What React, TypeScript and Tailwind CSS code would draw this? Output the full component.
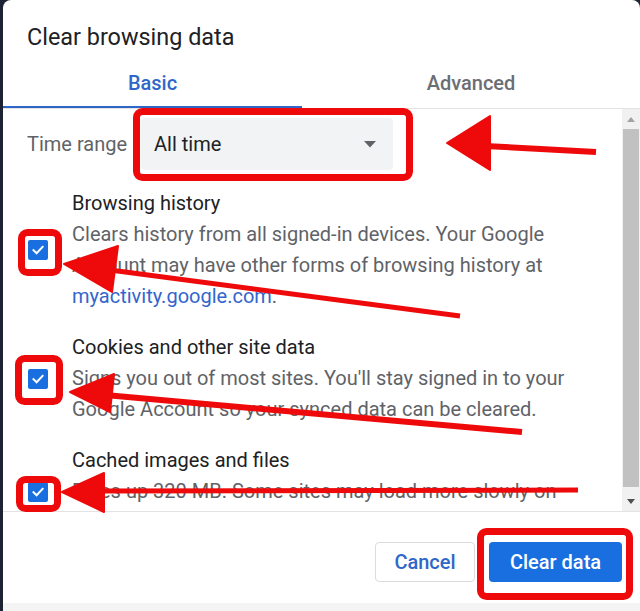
import React from "react";

const RED = "#ee0a0a";

function Checkbox() {
  return (
    <div className="w-[20px] h-[20px] rounded-[2px] bg-[#1a6fe0] flex items-center justify-center shrink-0">
      <svg width="14" height="14" viewBox="0 0 14 14">
        <path d="M2.5 7.2 L5.6 10.2 L11.6 3.8" stroke="white" strokeWidth="2" fill="none" strokeLinecap="square" />
      </svg>
    </div>
  );
}

function Item({ title, children }: { title: string; children: React.ReactNode }) {
  return (
    <div className="flex items-center">
      <div className="w-[69px] pl-[25px] flex items-center shrink-0">
        <Checkbox />
      </div>
      <div className="flex-1 pr-[28px] text-[20px] leading-[31px]">
        <div className="text-[#202124]">{title}</div>
        <div className="text-[#5f6368]">{children}</div>
      </div>
    </div>
  );
}

function Overlay() {
  return (
    <svg className="absolute inset-0 pointer-events-none" width="640" height="611" viewBox="0 0 640 611">
      <g fill="none" stroke={RED} strokeWidth="7">
        <rect x="136.5" y="111.5" width="273" height="66" rx="6" />
        <rect x="21.5" y="232.5" width="37" height="40" rx="6" />
        <rect x="18.5" y="358.5" width="41" height="43" rx="6" />
        <rect x="19.5" y="479.5" width="38" height="29" rx="6" />
        <rect x="480.5" y="531.5" width="149" height="65" rx="6" />
      </g>
      <g fill={RED} stroke={RED} strokeLinejoin="round">
        <polygon points="447,143 490,116 490,170" strokeWidth="2" />
        <line x1="485" y1="146" x2="596" y2="152" strokeWidth="6" />
        <polygon points="64,264 118,246 112,292" strokeWidth="2" />
        <line x1="110" y1="270" x2="460" y2="316" strokeWidth="5" />
        <polygon points="70,392 114,374 110,412" strokeWidth="2" />
        <line x1="105" y1="395" x2="522" y2="432" strokeWidth="6" />
        <polygon points="62,492 104,473 104,512" strokeWidth="2" />
        <line x1="100" y1="491" x2="578" y2="490" strokeWidth="5" />
      </g>
    </svg>
  );
}

export default function App() {
  return (
    <div
      className="relative w-[640px] h-[611px] bg-[#1d2334] flex overflow-hidden"
      style={{ fontFamily: "Roboto, 'Liberation Sans', sans-serif" }}
    >
      <div className="w-[3px] shrink-0" />
      <div className="flex-1 flex flex-col">
        <div className="flex-1 bg-white rounded-t-[8px] flex flex-col">
          <div className="h-[60px] pl-[24px] pt-[21px] text-[23.4px] leading-[32px] text-[#202124]">Clear browsing data</div>
          <div className="flex h-[49px] border-b border-[#e3e3e3]">
            <div className="w-[299px] flex flex-col">
              <div className="flex-1 flex items-center justify-center text-[20px] font-medium text-[#2f67c9]">Basic</div>
              <div className="h-[2px] bg-[#2f67c9]" />
            </div>
            <div className="flex-1 flex items-center justify-center pb-[2px] text-[20px] font-medium text-[#6b6e72]">Advanced</div>
          </div>
          <div className="h-[403px] flex border-b border-[#e3e3e3] overflow-hidden">
            <div className="flex-1 overflow-hidden">
              <div className="flex items-center pt-[9px]">
                <div className="w-[138px] pl-[24px] text-[20px] text-[#5f6368] whitespace-nowrap">Time range</div>
                <div className="w-[252px] h-[52px] bg-[#f1f3f4] rounded-[4px] flex items-center justify-between pl-[13px] pr-[17px]">
                  <span className="text-[20px] text-[#202124]">All time</span>
                  <svg width="12" height="7" viewBox="0 0 12 7">
                    <path d="M0 0 L12 0 L6 6.5 Z" fill="#5f6368" />
                  </svg>
                </div>
              </div>
              <div className="flex flex-col gap-[20px] pt-[18px]">
                <Item title="Browsing history">
                  Clears history from all signed-in devices. Your Google Account may have other forms of browsing history at{" "}
                  <span className="text-[#3366cc]">myactivity.google.com</span>.
                </Item>
                <Item title="Cookies and other site data">
                  Signs you out of most sites. You'll stay signed in to your Google Account so your synced data can be cleared.
                </Item>
                <Item title="Cached images and files">
                  Frees up 320 MB. Some sites may load more slowly on your next visit.
                </Item>
              </div>
            </div>
            <div className="w-[18px] bg-[#f1f1f1] flex flex-col items-stretch">
              <div className="h-[20px] flex items-center justify-center">
                <svg width="8" height="5" viewBox="0 0 8 5"><path d="M0 5 L4 0 L8 5 Z" fill="#a3a3a3" /></svg>
              </div>
              <div className="h-[358px] bg-[#c1c1c1] mx-[1px]" />
              <div className="flex-1" />
              <div className="h-[20px] flex items-center justify-center">
                <svg width="8" height="5" viewBox="0 0 8 5"><path d="M0 0 L8 0 L4 5 Z" fill="#505050" /></svg>
              </div>
            </div>
          </div>
          <div className="flex-1 flex items-start justify-end pt-[30px] pr-[18px] gap-[14px]">
            <button className="w-[100px] h-[40px] rounded-[4px] border border-[#dadce0] bg-white text-[20px] font-medium text-[#2f67c9]">Cancel</button>
            <button className="w-[133px] h-[40px] rounded-[4px] bg-[#1a6fe0] text-[20px] font-medium text-white">Clear data</button>
          </div>
        </div>
        <div className="h-[8px] bg-[#f4f4f4]" />
      </div>
      <Overlay />
    </div>
  );
}
